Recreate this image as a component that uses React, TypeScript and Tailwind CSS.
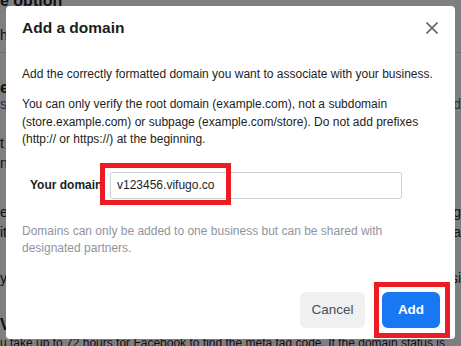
import React from "react";

function Row({
  mt,
  left,
  right,
  cls = "",
}: {
  mt: string;
  left: string;
  right?: string;
  cls?: string;
}) {
  return (
    <div className={`flex h-[16px] items-center justify-between whitespace-nowrap leading-[16px] ${mt} ${cls}`}>
      <span>{left}</span>
      {right ? <span>{right}</span> : null}
    </div>
  );
}

export default function App() {
  return (
    <div
      className="relative h-[346px] w-[461px] overflow-hidden bg-white text-[#1d2129]"
      style={{ fontFamily: '"Liberation Sans", Arial, sans-serif' }}
    >
      {/* background page */}
      <div className="flex flex-col text-[14px]">
        <Row mt="-mt-[7px]" left="e option" cls="text-[16px] font-bold" />
        <Row mt="mt-[18px]" left="he" />
        <div className="mt-[9px] h-px bg-[#dddfe2]" />
        <Row mt="mt-[27px]" left="et" cls="text-[16px] font-bold" />
        <Row mt="mt-0" left="s c" right="d" cls="text-[#4267b2]" />
        <Row mt="mt-[23px]" left="t" />
        <Row mt="mt-[4px]" left="n" />
        <Row mt="mt-[33px]" left="e T" right="g" />
        <Row mt="mt-[4px]" left="it" right="a" />
        <Row mt="mt-[30px]" left="y" right="si" />
        <Row mt="mt-[31px]" left="V" cls="text-[16px] font-bold" />
        <Row
          mt="mt-[2px]"
          left="u take up to 72 hours for Facebook to find the meta tag code. If the domain status is"
          cls="text-[12px]"
        />
      </div>

      {/* dim overlay */}
      <div className="absolute inset-0 bg-black/50" />

      {/* modal */}
      <div className="absolute left-[6px] top-[6px] flex h-[333px] w-[449px] flex-col rounded-[4px] bg-white">
        <div className="flex h-[44px] items-center justify-between pl-4 pr-[17px]">
          <h2 className="text-[15.5px] font-bold text-[#1c1e21]">Add a domain</h2>
          <svg width="12" height="12" viewBox="0 0 12 12">
            <path d="M0.5 0.5 L11.5 11.5 M11.5 0.5 L0.5 11.5" stroke="#606770" strokeWidth="1.6" />
          </svg>
        </div>

        <div className="flex flex-col px-4 pt-4 text-[12px] leading-[17px] text-[#1c1e21]">
          <p>Add the correctly formatted domain you want to associate with your business.</p>
          <p className="mt-[13px] leading-[17.5px]">
            You can only verify the root domain (example.com), not a subdomain (store.example.com) or subpage
            (example.com/store). Do not add prefixes (http:// or https://) at the beginning.
          </p>

          <div className="mt-[23px] flex items-center pl-2">
            <span className="w-[80px] font-bold">Your domain</span>
            <input
              readOnly
              value="v123456.vifugo.co"
              className="h-[27px] w-[292px] rounded-[2px] border border-[#ccd0d5] px-[6px] text-[12px] text-[#1c1e21] outline-none"
              style={{ fontFamily: '"Liberation Sans", Arial, sans-serif' }}
            />
          </div>

          <p className="mt-[24px] text-[#90949c]">
            Domains can only be added to one business but can be shared with designated partners.
          </p>
        </div>

        <div className="mt-auto flex justify-end pb-[11px] pr-[15px]">
          <button className="flex h-[36px] w-[65px] items-center justify-center rounded-[6px] bg-[#eff0f1] text-[13.5px] text-[#4b4f56]">
            Cancel
          </button>
          <button className="ml-[17px] flex h-[36px] w-[58px] items-center justify-center rounded-[6px] bg-[#1877f2] text-[13.5px] font-bold text-white">
            Add
          </button>
        </div>

        {/* annotation boxes */}
        <div className="pointer-events-none absolute left-[94px] top-[157px] h-[42px] w-[131px] border-[5px] border-[#ed1c24]" />
        <div className="pointer-events-none absolute left-[368px] top-[276px] h-[56px] w-[76px] border-[5px] border-[#ed1c24]" />
      </div>
    </div>
  );
}
